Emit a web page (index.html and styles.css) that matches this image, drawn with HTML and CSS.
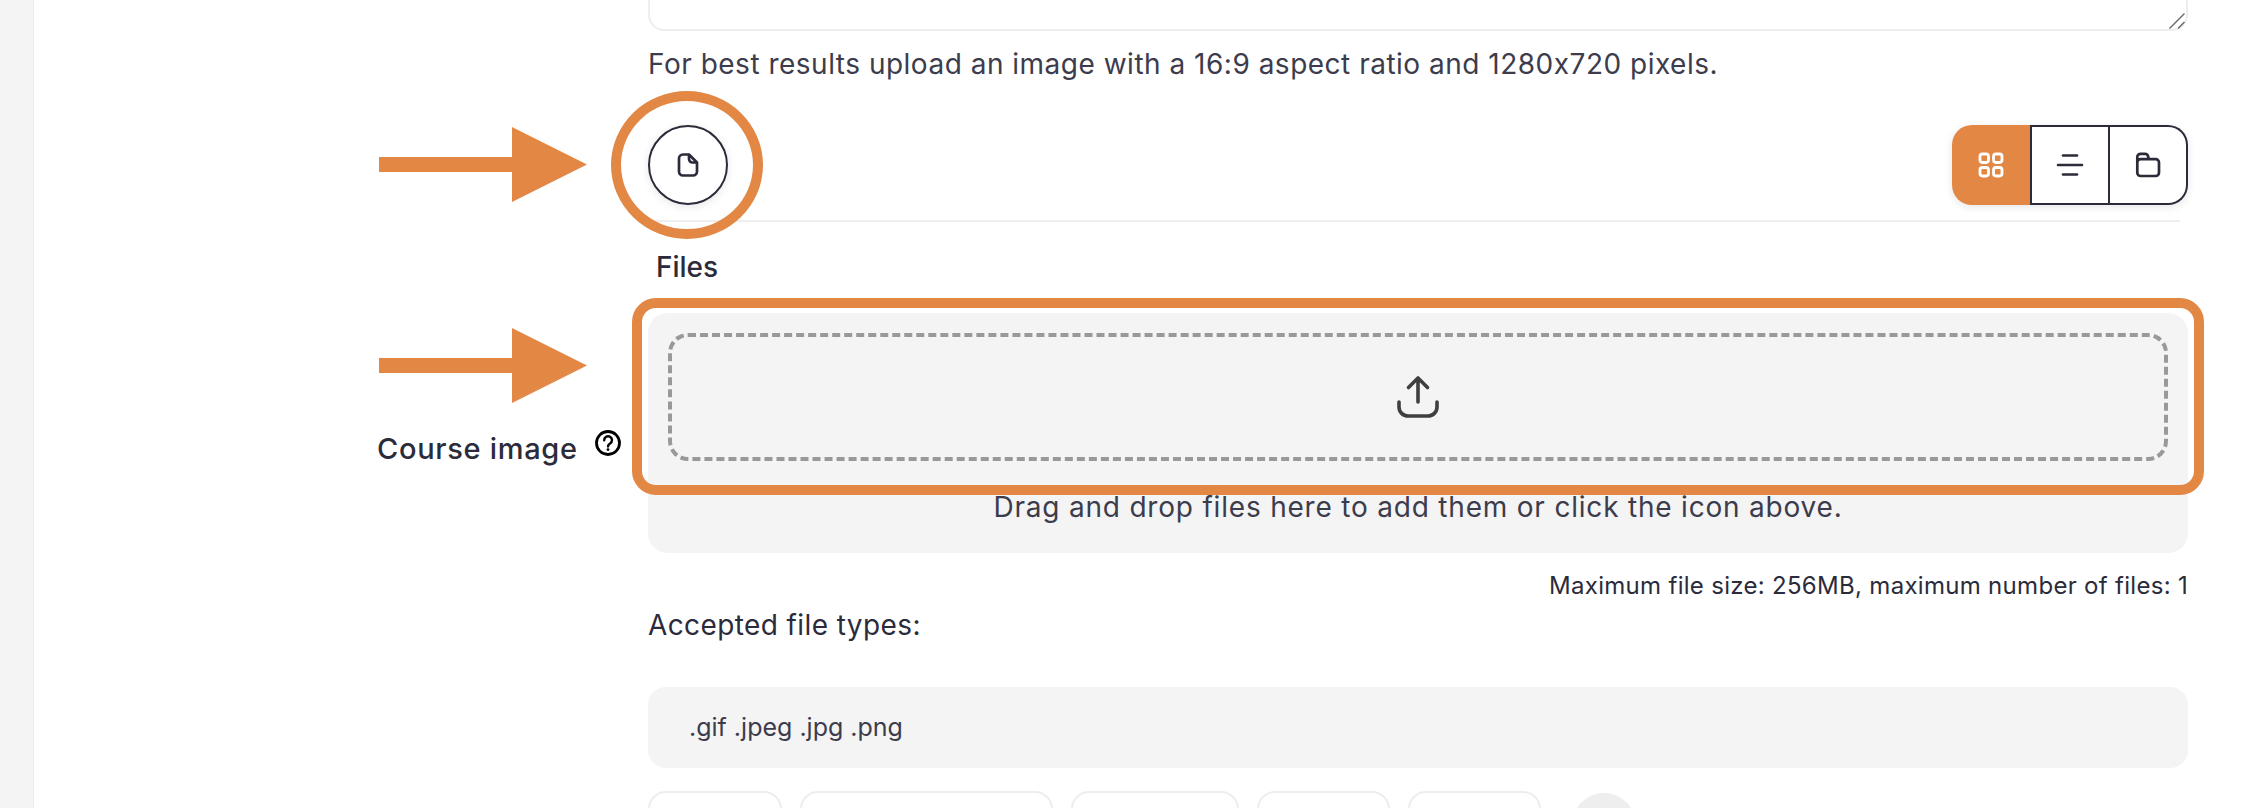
FILE: index.html
```html
<!DOCTYPE html>
<html lang="en">
<head>
<meta charset="utf-8">
<title>Course image</title>
<link rel="stylesheet" href="styles.css">
</head>
<body>
<aside class="rail"></aside>
<main class="form-row">
  <div class="label-col">
    <label class="field-label">Course image</label>
    <svg class="help-icon" viewBox="0 0 26 26" width="26" height="26" aria-hidden="true">
      <circle cx="13" cy="13" r="11.5" fill="none" stroke="#000" stroke-width="2.8"/>
      <path d="M9.2 10.2a3.9 3.9 0 1 1 5.9 3.3c-1.3.8-2.1 1.4-2.1 2.9" fill="none" stroke="#000" stroke-width="2.4" stroke-linecap="round"/>
      <circle cx="13" cy="19.6" r="1.4" fill="#000"/>
    </svg>
  </div>
  <div class="field-col">
    <div class="summary-wrap">
      <textarea class="summary" aria-label="Summary"></textarea>
      <svg class="grip" viewBox="0 0 16 16" width="16" height="16" aria-hidden="true"><path d="M.5 15.500L15.500.5M9 15.500L15.500 9" fill="none" stroke="#666" stroke-width="1.400"/></svg>
    </div>
    <p class="hint">For best results upload an image with a 16:9 aspect ratio and 1280x720 pixels.</p>
    <div class="toolbar">
      <button class="round-btn" aria-label="Add file">
        <svg viewBox="0 0 32 32" width="32" height="32"><path d="M11 5.5h6l8 8v9a4 4 0 0 1-4 4H11a4 4 0 0 1-4-4v-13a4 4 0 0 1 4-4z M17 5.5v4.5a3.5 3.5 0 0 0 3.5 3.5H25" fill="none" stroke="#2b2b3a" stroke-width="2.7" stroke-linejoin="round"/></svg>
      </button>
      <div class="view-group">
        <button class="view-btn active" aria-label="Icons">
          <svg viewBox="0 0 32 32" width="32" height="32"><g fill="none" stroke="#fff" stroke-width="2.8"><rect x="5" y="5" width="8.5" height="8.5" rx="2.4"/><rect x="18.5" y="5" width="8.5" height="8.5" rx="2.4"/><rect x="5" y="18.5" width="8.5" height="8.5" rx="2.4"/><rect x="18.5" y="18.5" width="8.5" height="8.5" rx="2.4"/></g></svg>
        </button>
        <button class="view-btn" aria-label="Details">
          <svg viewBox="0 0 32 32" width="32" height="32"><g stroke="#2b2b3a" stroke-width="2.6" stroke-linecap="round"><path d="M9 6.5h14"/><path d="M4 16h24"/><path d="M9 25.500h14"/></g></svg>
        </button>
        <button class="view-btn" aria-label="Tree">
          <svg viewBox="0 0 32 32" width="32" height="32"><path d="M5.300 13V8a3.200 3.200 0 0 1 3.200-3.200h4.500a3.200 3.200 0 0 1 3 2.200l.8 3.200M8.800 10.200h14.900a3.300 3.300 0 0 1 3.300 3.300v10.200a3.300 3.300 0 0 1-3.300 3.300H8.600a3.300 3.300 0 0 1-3.300-3.300V13.500a3.300 3.300 0 0 1 3.500-3.300z" fill="none" stroke="#2b2b3a" stroke-width="2.700" stroke-linejoin="round"/></svg>
        </button>
      </div>
    </div>
    <hr class="rule">
    <h3 class="files-title">Files</h3>
    <div class="dropzone">
      <div class="drop-target">
        <svg viewBox="0 0 46 46" width="46" height="46"><path d="M23 4v24M13.500 13.500L23 4l9.500 9.500M4 28v5a9 9 0 0 0 9 9h20a9 9 0 0 0 9-9v-5" fill="none" stroke="#3f3f3f" stroke-width="3.600" stroke-linecap="round" stroke-linejoin="round"/></svg>
      </div>
      <p class="drop-text">Drag and drop files here to add them or click the icon above.</p>
    </div>
    <p class="limits">Maximum file size: 256MB, maximum number of files: 1</p>
    <p class="accepted">Accepted file types:</p>
    <div class="types">.gif .jpeg .jpg .png</div>
    <div class="chips">
      <div class="chip chip-a"></div>
      <div class="chip chip-b"></div>
      <div class="chip chip-c"></div>
      <div class="chip chip-d"></div>
      <div class="chip chip-d"></div>
      <div class="chip-round"></div>
    </div>
  </div>
</main>

<svg class="arrow arrow-one" viewBox="0 0 208 75" width="208" height="75" aria-hidden="true"><polygon points="0,30 133,30 133,0 208,37.500 133,75 133,45 0,45" fill="#e38745"/></svg>
<svg class="arrow arrow-two" viewBox="0 0 208 75" width="208" height="75" aria-hidden="true"><polygon points="0,30 133,30 133,0 208,37.500 133,75 133,45 0,45" fill="#e38745"/></svg>
<div class="ring-circle"></div>
<div class="ring-box"></div>
</body>
</html>
```
FILE: styles.css
```css
* { box-sizing: border-box; }
html, body { margin: 0; height: 808px; }
body {
  display: flex;
  position: relative;
  overflow: hidden;
  background: #fff;
  color: #2b2b3a;
  font-family: Inter, "Liberation Sans", sans-serif;
  font-feature-settings: "calt" 0;
}
p, h3 { margin: 0; }

.rail {
  width: 34px;
  flex: none;
  background: #f4f4f4;
  border-right: 1px solid #ececec;
}
.form-row {
  flex: 1;
  height: 808px;
  overflow: hidden;
  display: grid;
  grid-template-columns: 614px 1540px;
  align-content: start;
}
.label-col {
  display: flex;
  align-items: flex-start;
  padding: 431px 0 0 343px;
}
.field-label {
  font-size: 29px;
  font-weight: 500;
  letter-spacing: .7px;
  line-height: 36px;
  width: 218px;
  white-space: nowrap;
}
.help-icon { margin-top: -1px; flex: none; }

.summary-wrap { position: relative; height: 31px; }
.summary {
  display: block;
  width: 100%;
  height: 31px;
  padding: 0;
  resize: none;
  background: #fff;
  border: 2px solid #eee;
  border-top: 0;
  border-radius: 0 0 16px 16px;
  outline: 0;
}
.grip { position: absolute; right: 3px; top: 13px; }
.hint {
  margin-top: 16px;
  font-size: 28px;
  letter-spacing: .5px;
  line-height: 34px;
  color: #3c3c4c;
  white-space: nowrap;
}
.toolbar {
  margin-top: 44px;
  display: flex;
  justify-content: space-between;
}
.round-btn {
  width: 80px;
  height: 80px;
  padding: 0;
  display: flex;
  align-items: center;
  justify-content: center;
  background: #fff;
  border: 2px solid #2b2b3a;
  border-radius: 50%;
  box-shadow: 0 2px 8px rgba(0, 0, 0, .1);
}
.view-group {
  display: flex;
  height: 80px;
  border-radius: 20px;
  box-shadow: 0 2px 8px rgba(0, 0, 0, .1);
}
.view-btn {
  width: 78px;
  padding: 0;
  display: flex;
  align-items: center;
  justify-content: center;
  background: #fff;
  border: 2px solid #2b2b3a;
  border-left-width: 0;
}
.view-btn:last-child { border-radius: 0 20px 20px 0; }
.view-btn.active {
  width: 80px;
  background: #e38745;
  border: 0;
  border-right: 2px solid #2b2b3a;
  border-radius: 20px 0 0 20px;
}
.rule {
  margin: 15px 8px 0 7px;
  height: 2px;
  border: 0;
  background: #eee;
}
.files-title {
  margin: 28px 0 0 8px;
  font-size: 28px;
  font-weight: 500;
  line-height: 34px;
}
.dropzone {
  margin-top: 29px;
  height: 240px;
  padding: 20px;
  background: #f4f4f4;
  border-radius: 20px;
}
.drop-target {
  height: 128px;
  display: flex;
  align-items: center;
  justify-content: center;
  border: 4px dashed #999;
  border-radius: 20px;
}
.drop-text {
  margin-top: 29px;
  text-align: center;
  font-size: 28px;
  letter-spacing: .8px;
  line-height: 34px;
  color: #3c3c4c;
}
.limits {
  margin-top: 18px;
  text-align: right;
  font-size: 24px;
  letter-spacing: .3px;
  line-height: 30px;
}
.accepted {
  margin-top: 7px;
  font-size: 28px;
  letter-spacing: .4px;
  line-height: 34px;
}
.types {
  margin-top: 45px;
  height: 81px;
  padding: 0 0 2px 41px;
  display: flex;
  align-items: center;
  background: #f4f4f4;
  border-radius: 18px;
  font-size: 25px;
  color: #3c3c4c;
}
.chips {
  margin-top: 23px;
  height: 17px;
  overflow: hidden;
  display: flex;
  gap: 18px;
  align-items: flex-start;
}
.chip {
  height: 70px;
  flex: none;
  background: #fff;
  border: 2px solid #eee;
  border-radius: 18px;
}
.chip-a { width: 134px; }
.chip-b { width: 253px; }
.chip-c { width: 168px; }
.chip-d { width: 133px; }
.chip-round {
  width: 64px;
  height: 64px;
  flex: none;
  margin: 2px 0 0 13px;
  border-radius: 50%;
  background: #eee;
}

/* annotations drawn over the form */
.arrow { position: absolute; left: 379px; }
.arrow-one { top: 127px; }
.arrow-two { top: 328px; }
.ring-circle {
  position: absolute;
  left: 611px;
  top: 91px;
  width: 152px;
  height: 148px;
  border: 10px solid #e38745;
  border-radius: 50%;
}
.ring-box {
  position: absolute;
  left: 632px;
  top: 298px;
  width: 1572px;
  height: 197px;
  border: 10px solid #e38745;
  border-radius: 24px;
}
```
